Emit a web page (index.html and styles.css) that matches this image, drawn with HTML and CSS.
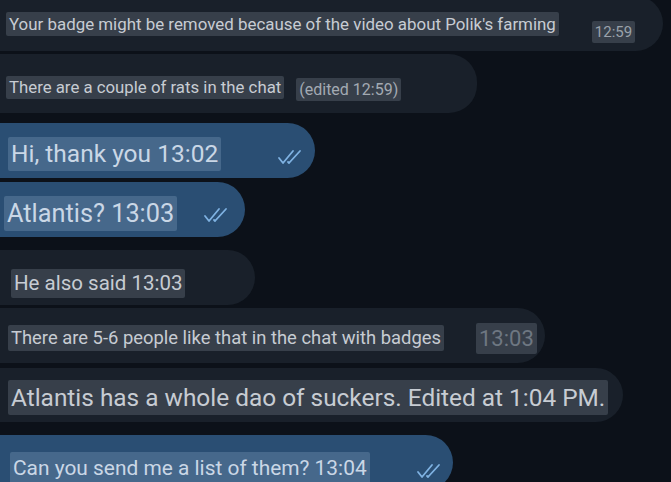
FILE: index.html
```html
<!DOCTYPE html>
<html lang="en">
<head>
  <meta charset="UTF-8" />
  <meta name="viewport" content="width=device-width, initial-scale=1.0"/>
  <title>Chat</title>
  <link rel="stylesheet" href="styles.css">
</head>
<body>
  <div class="chat">
    <div class="bubble in b1">
      <span class="hl">Your badge might be removed because of the video about Polik's farming</span>
      <span class="hl meta time-sm">12:59</span>
    </div>
    <div class="bubble in b2">
      <span class="hl">There are a couple of rats in the chat</span>
      <span class="hl meta edited">(edited 12:59)</span>
    </div>
    <div class="bubble out b3">
      <span class="hl">Hi, thank you 13:02</span>
      <svg class="meta checks" viewBox="0 0 28 16"><path d="M2 9 L6 14 L16 2 M11 13 L12 14 L23 2"/></svg>
    </div>
    <div class="bubble out b4">
      <span class="hl">Atlantis? 13:03</span>
      <svg class="meta checks" viewBox="0 0 28 16"><path d="M2 9 L6 14 L16 2 M11 13 L12 14 L23 2"/></svg>
    </div>
    <div class="bubble in b5">
      <span class="hl">He also said 13:03</span>
    </div>
    <div class="bubble in b6">
      <span class="hl">There are 5-6 people like that in the chat with badges</span>
      <span class="hl meta time-lg">13:03</span>
    </div>
    <div class="bubble in b7">
      <span class="hl">Atlantis has a whole dao of suckers. Edited at 1:04 PM.</span>
    </div>
    <div class="bubble out b8">
      <span class="hl">Can you send me a list of them? 13:04</span>
      <svg class="meta checks" viewBox="0 0 28 16"><path d="M2 9 L6 14 L16 2 M11 13 L12 14 L23 2"/></svg>
    </div>
  </div>
</body>
</html>
```

FILE: styles.css
```css
:root {
  --bg: #0c1119;
  --in-bg: #19202a;
  --in-hl: #373f4a;
  --in-text: #c7ccd3;
  --out-bg: #2a4e73;
  --out-hl: #46688b;
  --out-text: #cad7e6;
  --check: #7fb2e2;
}

html, body {
  margin: 0;
  padding: 0;
  background: var(--bg);
  height: 100%;
  overflow: hidden;
}

body {
  font-family: Roboto, "Liberation Sans", sans-serif;
}

.chat {
  display: flex;
  flex-direction: column;
  align-items: flex-start;
}

.bubble {
  display: flex;
  align-items: center;
  box-sizing: border-box;
  height: 55px;
  margin-left: -30px;
  border-radius: 28px;
  white-space: nowrap;
}

.bubble.in {
  background: var(--in-bg);
  color: var(--in-text);
}

.bubble.out {
  background: var(--out-bg);
  color: var(--out-text);
}

.hl {
  padding: 2px 3px;
  border-radius: 2px;
}

.in .hl { background: var(--in-hl); }
.out .hl { background: var(--out-hl); }

.checks {
  width: 28px;
  height: 16px;
  fill: none;
  stroke: var(--check);
  stroke-width: 1.8;
  stroke-linecap: round;
  stroke-linejoin: round;
}

/* individual messages */
.b1 { margin-top: -4px; width: 693px; padding-left: 36px; font-size: 16.9px; line-height: 20px; }
.b1 .meta { margin-left: 33px; margin-top: 17px; }
.time-sm { font-size: 15px; line-height: 18px; color: #9aa2ab; }

.b2 { margin-top: 3px; height: 59px; width: 507px; padding: 8px 0 0 36px; font-size: 16.8px; line-height: 19px; }
.b2 .meta { margin-left: 12px; margin-top: 3px; }
.edited { color: #a3aab3; font-size: 16px; }

.b3 { margin-top: 10px; width: 345px; padding: 7px 0 0 38px; font-size: 24.5px; line-height: 30px; }
.b3 .meta { margin-left: 56px; margin-top: 6px; }

.b4 { margin-top: 4px; width: 275px; padding: 8px 0 0 34px; font-size: 25.3px; line-height: 31px; }
.b4 .meta { margin-left: 26px; margin-top: 2px; }

.b5 { margin-top: 13px; width: 285px; padding: 12px 0 0 41px; font-size: 20.5px; line-height: 25px; }

.b6 { margin-top: 3px; width: 575px; padding: 5px 0 0 38px; font-size: 18.4px; line-height: 22px; }
.b6 .meta { margin-left: 32px; }
.time-lg { font-size: 22px; line-height: 27px; color: #6e7782; }

.b7 { margin-top: 5px; height: 54px; width: 653px; padding: 5px 0 0 38px; font-size: 24.4px; line-height: 31px; }

.b8 { margin-top: 13px; width: 483px; padding: 11px 0 0 40px; font-size: 20.9px; line-height: 29px; }
.b8 .meta { margin-left: 46px; margin-top: 6px; }
```
